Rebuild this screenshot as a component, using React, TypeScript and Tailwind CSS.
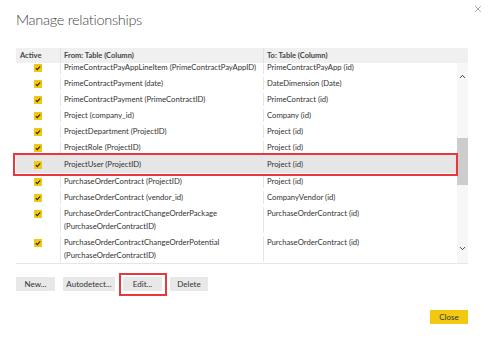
import { X, ChevronUp, ChevronDown } from "lucide-react";

type Rel = { from: string[]; to: string; selected?: boolean };

const rows: Rel[] = [
  { from: ["PrimeContractPayAppLineItem (PrimeContractPayAppID)"], to: "PrimeContractPayApp (id)" },
  { from: ["PrimeContractPayment (date)"], to: "DateDimension (Date)" },
  { from: ["PrimeContractPayment (PrimeContractID)"], to: "PrimeContract (id)" },
  { from: ["Project (company_id)"], to: "Company (id)" },
  { from: ["ProjectDepartment (ProjectID)"], to: "Project (id)" },
  { from: ["ProjectRole (ProjectID)"], to: "Project (id)" },
  { from: ["ProjectUser (ProjectID)"], to: "Project (id)", selected: true },
  { from: ["PurchaseOrderContract (ProjectID)"], to: "Project (id)" },
  { from: ["PurchaseOrderContract (vendor_id)"], to: "CompanyVendor (id)" },
  {
    from: ["PurchaseOrderContractChangeOrderPackage", "(PurchaseOrderContractID)"],
    to: "PurchaseOrderContract (id)",
  },
  {
    from: ["PurchaseOrderContractChangeOrderPotential", "(PurchaseOrderContractID)"],
    to: "PurchaseOrderContract (id)",
  },
];

function Check() {
  return (
    <span className="flex h-[8px] w-[8px] items-center justify-center bg-[#f2c811]">
      <svg viewBox="0 0 8 8" className="h-[8px] w-[8px]">
        <path d="M1.8 4.2 L3.3 5.6 L6.2 2.4" fill="none" stroke="#3a3000" strokeWidth="1.3" />
      </svg>
    </span>
  );
}

function Button({ label, width }: { label: string; width: string }) {
  return (
    <button className={`block h-[14px] bg-[#e8e8e8] text-[8px] leading-[14px] text-[#333] ${width}`}>
      {label}
    </button>
  );
}

export default function App() {
  return (
    <div
      className="relative h-[342px] w-[488px] overflow-hidden bg-white text-[#333]"
      style={{ fontFamily: 'Lato, "Noto Sans", sans-serif' }}
    >
      <X className="absolute left-[473px] top-[4px] h-[10px] w-[10px] text-[#555]" strokeWidth={1.2} />

      <h1 className="pl-[16px] pt-[10px] text-[14.5px] font-light leading-[20px] tracking-[-0.3px] text-[#444]">
        Manage relationships
      </h1>

      {/* Table */}
      <div className="relative ml-[16px] mt-[18px] w-[452px] border-b border-[#e6e6e6]">
        <div className="flex h-[15px] bg-[#f0f0f0] text-[7.5px] font-bold leading-[15px] text-[#444]">
          <div className="w-[45px] border-r border-[#e2e2e2] pl-[4px]">Active</div>
          <div className="w-[203px] border-r border-[#e2e2e2] pl-[3px]">From: Table (Column)</div>
          <div className="flex-1 pl-[3px]">To: Table (Column)</div>
        </div>

        <div className="flex h-[200px]">
          <div className="h-full w-[441px] overflow-hidden">
            <div className="-mt-[4px]">
              {rows.map((r, i) => (
                <div
                  key={i}
                  className={`flex whitespace-nowrap text-[7.7px] leading-[13px] ${
                    r.selected ? "bg-[#e6e6e6] py-[2.5px]" : "py-[1.5px]"
                  }`}
                >
                  <div className="flex w-[45px] shrink-0 items-start justify-center border-r border-[#e6e6e6] pt-[3px]">
                    <Check />
                  </div>
                  <div className="w-[203px] shrink-0 overflow-hidden border-r border-[#e6e6e6] pl-[3px]">
                    {r.from.map((l) => (
                      <div key={l}>{l}</div>
                    ))}
                  </div>
                  <div className="flex-1 pl-[3px]">{r.to}</div>
                </div>
              ))}
            </div>
          </div>

          {/* Scrollbar */}
          <div className="relative h-full w-[11px] bg-[#f7f7f7]">
            <ChevronUp className="absolute left-[1px] top-[9px] h-[9px] w-[9px] text-[#333]" strokeWidth={2.5} />
            <div className="absolute left-0 top-[75px] h-[47px] w-[11px] bg-[#cdcdcd]" />
            <ChevronDown className="absolute left-[1px] top-[181px] h-[9px] w-[9px] text-[#333]" strokeWidth={2.5} />
          </div>
        </div>

        {/* annotation box */}
        <div className="absolute left-[-3px] top-[105px] h-[23px] w-[445px] border-2 border-[#e8383d]" />
      </div>

      {/* Buttons */}
      <div className="relative ml-[16px] mt-[13px] flex gap-[8px]">
        <Button label="New..." width="w-[39px]" />
        <Button label="Autodetect..." width="w-[52px]" />
        <Button label="Edit..." width="w-[39px]" />
        <Button label="Delete" width="w-[38px]" />
        <div className="absolute left-[103px] top-[-4px] h-[23px] w-[48px] border-2 border-[#e8383d]" />
      </div>

      <div className="mr-[20px] mt-[19px] flex justify-end">
        <button className="h-[14px] w-[38px] bg-[#f2c811] text-[8px] leading-[14px] text-[#333]">
          Close
        </button>
      </div>
    </div>
  );
}
